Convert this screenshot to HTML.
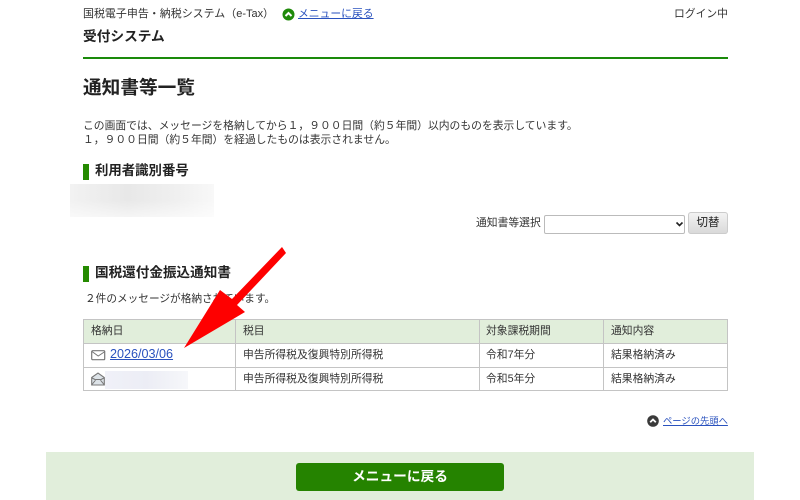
<!DOCTYPE html>
<html lang="ja"><head><meta charset="utf-8"><title>通知書等一覧</title>
<style>
html,body{margin:0;padding:0;background:#fff}
body{width:800px;height:500px;position:relative;overflow:hidden;font-family:"Liberation Sans","Noto Sans CJK JP",sans-serif;color:#333;font-size:10.8px}
.a{position:absolute;white-space:nowrap;line-height:14px}
a{color:#2a52be;text-decoration:underline}
.line{position:absolute;background:#c4c4c4}
.bar{position:absolute;left:83px;width:6px;height:16px;background:#258a00}
.h2{font-weight:bold;font-size:13.4px;color:#222;left:95px}
</style></head><body>
<div class="a" style="left:83px;top:7px;font-size:10.97px">国税電子申告・納税システム（e-Tax）</div>
<svg class="a" style="left:282px;top:8px" width="13" height="13" viewBox="0 0 13 13"><circle cx="6.5" cy="6.5" r="6" fill="#1f8a0a"/><path d="M3.5 8 6.5 5 9.500 8" fill="none" stroke="#fff" stroke-width="2"/></svg>
<a class="a" style="left:298px;top:7px">メニューに戻る</a>
<div class="a" style="left:674px;top:7px">ログイン中</div>
<div class="a" style="left:83px;top:30px;font-weight:bold;font-size:13.7px;color:#222">受付システム</div>
<div style="position:absolute;left:83px;top:57px;width:645px;height:2px;background:#1a8a0a"></div>
<div class="a" style="left:83px;top:76px;font-weight:bold;font-size:18.67px;line-height:24px;color:#222">通知書等一覧</div>
<div class="a" style="left:83px;top:119px">この画面では、メッセージを格納してから１，９００日間（約５年間）以内のものを表示しています。</div>
<div class="a" style="left:83px;top:133px">１，９００日間（約５年間）を経過したものは表示されません。</div>
<div class="bar" style="top:164px"></div>
<div class="a h2" style="top:164px">利用者識別番号</div>
<div style="position:absolute;left:70px;top:184px;width:144px;height:33px;background:linear-gradient(90deg,#f2f2f2,#e8e8e8 40%,#f0f0f0 75%,#f8f8f8);-webkit-mask-image:linear-gradient(180deg,#000,#000 50%,rgba(0,0,0,.45))"></div>
<div class="a" style="left:476px;top:216px">通知書等選択</div>
<div style="position:absolute;left:544px;top:215px;width:139px;height:17px;border:1px solid #bbb;border-radius:2px;background:#fff"></div>
<svg class="a" style="left:675px;top:221px" width="9" height="7" viewBox="0 0 9 7"><path d="M1.500 1.500 4.500 4.500 7.500 1.500" fill="none" stroke="#222" stroke-width="1.600"/></svg>
<div class="a" style="left:688px;top:212px;width:40px;height:22px;border-radius:3px;background:linear-gradient(#f4f4f4,#d8d8d8);box-shadow:0 0 0 1px #ccc inset;text-align:center;line-height:22px;font-size:11.500px;color:#222">切替</div>
<div class="bar" style="top:266px"></div>
<div class="a h2" style="top:266px;font-size:13.6px">国税還付金振込通知書</div>
<div class="a" style="left:85px;top:292px;font-size:10.67px">２件のメッセージが格納されています。</div>

<div style="position:absolute;left:84px;top:320px;width:644px;height:23px;background:#e1eedb"></div>
<div class="line" style="left:83px;top:319px;width:645px;height:1px"></div>
<div class="line" style="left:83px;top:343px;width:645px;height:1px"></div>
<div class="line" style="left:83px;top:367px;width:645px;height:1px"></div>
<div class="line" style="left:83px;top:390px;width:645px;height:1px"></div>
<div class="line" style="left:83px;top:319px;width:1px;height:72px"></div>
<div class="line" style="left:235px;top:319px;width:1px;height:72px"></div>
<div class="line" style="left:479px;top:319px;width:1px;height:72px"></div>
<div class="line" style="left:603px;top:319px;width:1px;height:72px"></div>
<div class="line" style="left:727px;top:319px;width:1px;height:72px"></div>

<div class="a" style="left:91px;top:324px">格納日</div>
<div class="a" style="left:243px;top:324px">税目</div>
<div class="a" style="left:486px;top:324px">対象課税期間</div>
<div class="a" style="left:611px;top:324px">通知内容</div>

<svg class="a" style="left:91px;top:349px" width="15" height="12" viewBox="0 0 15 12"><rect x=".7" y="1.700" width="13" height="9" rx="1" fill="#fff" stroke="#777" stroke-width="1.200"/><path d="M1 2.500 7.200 7 14 2.500" fill="none" stroke="#777"/></svg>
<a class="a" style="left:110px;top:347px;font-size:12.6px">2026/03/06</a>
<div class="a" style="left:243px;top:348px">申告所得税及復興特別所得税</div>
<div class="a" style="left:486px;top:348px">令和7年分</div>
<div class="a" style="left:611px;top:348px">結果格納済み</div>

<svg class="a" style="left:91px;top:372px" width="14" height="14" viewBox="0 0 14 14"><path d="M.7 5.500 7 1 13.300 5.500V13H.7Z" fill="#dde3e8" stroke="#777" stroke-width="1.100"/><path d="M1 12.500 5 7.500H9L13 12.500M1 6 5 8M13 6 9 8" fill="none" stroke="#777"/></svg>
<div style="position:absolute;left:105px;top:371px;width:83px;height:18px;background:linear-gradient(90deg,#f0f1f8,#ecedf5 50%,#f6f7fa)"></div>
<div class="a" style="left:243px;top:372px">申告所得税及復興特別所得税</div>
<div class="a" style="left:486px;top:372px">令和5年分</div>
<div class="a" style="left:611px;top:372px">結果格納済み</div>

<svg class="a" style="left:647px;top:415px" width="12" height="12" viewBox="0 0 12 12"><circle cx="6" cy="6" r="5.800" fill="#3a3a3a"/><path d="M3.200 7.300 6 4.500 8.800 7.300" fill="none" stroke="#fff" stroke-width="1.800"/></svg>
<a class="a" style="left:663px;top:414px;font-size:9.3px">ページの先頭へ</a>

<div style="position:absolute;left:46px;top:452px;width:708px;height:48px;background:#e1eedb"></div>
<div style="position:absolute;left:296px;top:463px;width:208px;height:28px;border-radius:3px;background:#258300;color:#fff;font-weight:bold;font-size:13.7px;line-height:28px;text-align:center">メニューに戻る</div>

<svg style="position:absolute;left:0;top:0" width="800" height="500"><polygon points="184,348 220,290 232,299 282,247 286,253 237,305 245,312" fill="#fe0000"/></svg>
</body></html>
